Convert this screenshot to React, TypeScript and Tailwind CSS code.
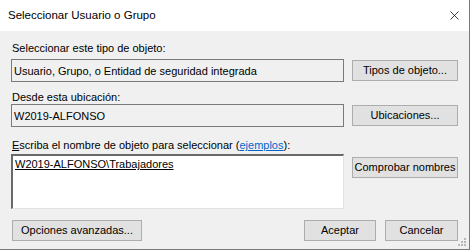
import { X } from "lucide-react";

const btn =
  "h-[21px] border border-[#adadad] bg-[#e1e1e1] text-[11px] text-black flex items-center justify-center leading-none whitespace-nowrap";

const App = () => {
  return (
    <div className="w-[472px] h-[252px] bg-white font-['Liberation_Sans',Arial,sans-serif] text-black">
      <div className="w-[470px] h-[250px] border-r border-b border-[#7a7a7a] flex flex-col">
        {/* Title bar */}
        <div className="h-[31px] bg-white flex items-center justify-between pl-[8px] pr-[7px] shrink-0">
          <span className="text-[11.5px]">Seleccionar Usuario o Grupo</span>
          <X className="h-[15px] w-[15px] text-black" strokeWidth={1.2} />
        </div>

        {/* Body */}
        <div className="flex-1 bg-[#f0f0f0] pl-[11px] pr-[11px] pt-[10px] text-[11px] leading-[14px] relative">
          <p className="h-[14px] pl-[1px]">Seleccionar este tipo de objeto:</p>
          <div className="flex items-center gap-[8px] mt-[4px]">
            <div className="w-[333px] h-[23px] border border-[#7a7a7a] bg-[#f0f0f0] flex items-center px-[2px]">
              Usuario, Grupo, o Entidad de seguridad integrada
            </div>
            <button className={btn + " w-[106px]"}>Tipos de objeto...</button>
          </div>

          <p className="h-[14px] pl-[1px] mt-[8px]">Desde esta ubicación:</p>
          <div className="flex items-center gap-[8px] mt-0">
            <div className="w-[333px] h-[23px] border border-[#7a7a7a] bg-[#f0f0f0] flex items-center px-[2px]">
              W2019-ALFONSO
            </div>
            <button className={btn + " w-[106px]"}>Ubicaciones...</button>
          </div>

          <p className="h-[14px] pl-[1px] mt-[11px]">
            <span className="underline">E</span>scriba el nombre de objeto para seleccionar (<span className="text-[#0066cc] underline">ejemplos</span>):
          </p>
          <div className="flex items-start gap-[8px] mt-[2px]">
            <div className="w-[333px] h-[55px] border-t-2 border-l-2 border-t-[#696969] border-l-[#696969] border-r border-b border-r-[#e3e3e3] border-b-[#e3e3e3] bg-white px-[2px] pt-[1px]">
              <span className="underline">W2019-ALFONSO\Trabajadores</span>
            </div>
            <button className={btn + " w-[106px] mt-[3px]"}>Comprobar nombres</button>
          </div>

          <div className="flex items-center mt-[11px] pl-[1px]">
            <button className={btn + " w-[130px]"}>Opciones avanzadas...</button>
            <div className="flex-1" />
            <button className={btn + " w-[72px]"}>Aceptar</button>
            <button className={btn + " w-[73px] ml-[9px]"}>Cancelar</button>
          </div>

          {/* size grip */}
          <svg className="absolute right-[2px] bottom-[2px]" width="10" height="10" viewBox="0 0 10 10">
            <rect x="7" y="1" width="2" height="2" fill="#b8b8b8" />
            <rect x="4" y="4" width="2" height="2" fill="#b8b8b8" />
            <rect x="7" y="4" width="2" height="2" fill="#b8b8b8" />
            <rect x="1" y="7" width="2" height="2" fill="#b8b8b8" />
            <rect x="4" y="7" width="2" height="2" fill="#b8b8b8" />
            <rect x="7" y="7" width="2" height="2" fill="#b8b8b8" />
          </svg>
        </div>
      </div>
    </div>
  );
};

export default App;
